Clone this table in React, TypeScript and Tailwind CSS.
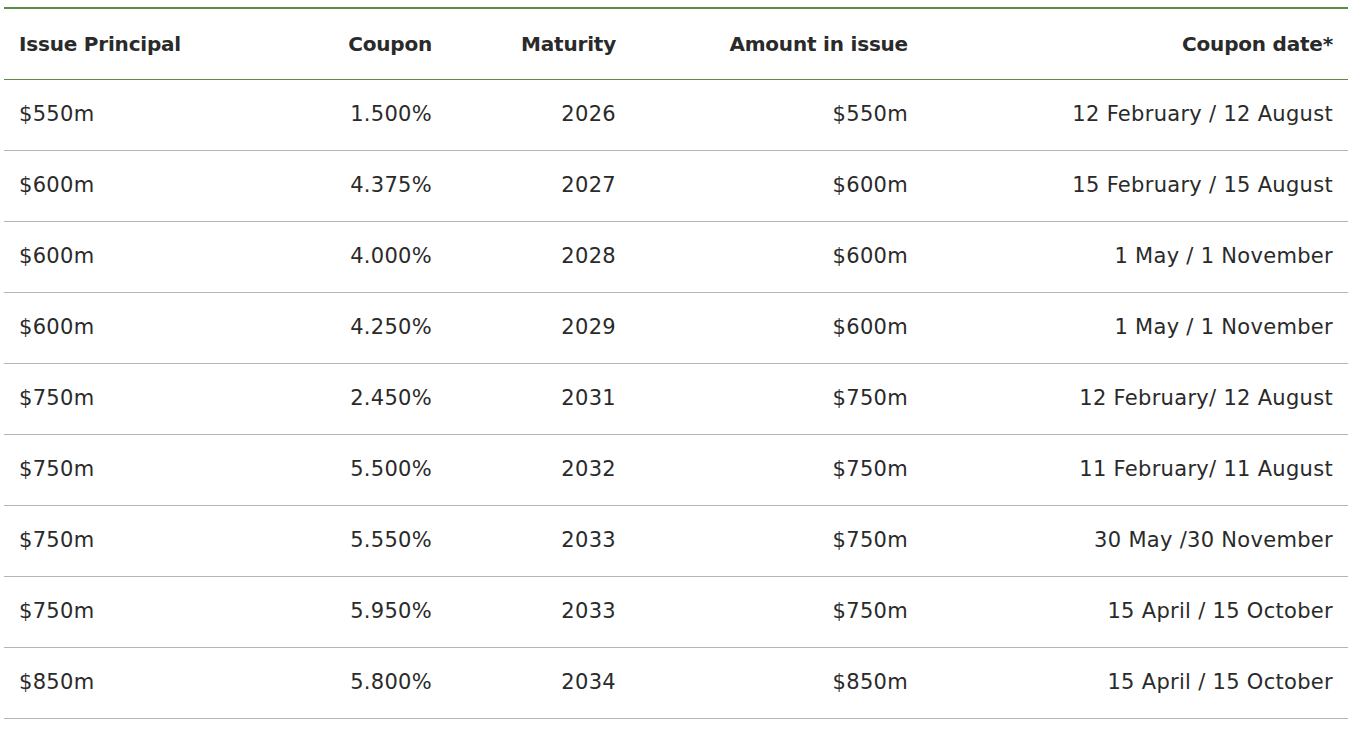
import React from 'react';

type Bond = {
  principal: string;
  coupon: string;
  maturity: string;
  amount: string;
  dates: string;
};

const bonds: Bond[] = [
  { principal: '$550m', coupon: '1.500%', maturity: '2026', amount: '$550m', dates: '12 February / 12 August' },
  { principal: '$600m', coupon: '4.375%', maturity: '2027', amount: '$600m', dates: '15 February / 15 August' },
  { principal: '$600m', coupon: '4.000%', maturity: '2028', amount: '$600m', dates: '1 May / 1 November' },
  { principal: '$600m', coupon: '4.250%', maturity: '2029', amount: '$600m', dates: '1 May / 1 November' },
  { principal: '$750m', coupon: '2.450%', maturity: '2031', amount: '$750m', dates: '12 February/ 12 August' },
  { principal: '$750m', coupon: '5.500%', maturity: '2032', amount: '$750m', dates: '11 February/ 11 August' },
  { principal: '$750m', coupon: '5.550%', maturity: '2033', amount: '$750m', dates: '30 May /30 November' },
  { principal: '$750m', coupon: '5.950%', maturity: '2033', amount: '$750m', dates: '15 April / 15 October' },
  { principal: '$850m', coupon: '5.800%', maturity: '2034', amount: '$850m', dates: '15 April / 15 October' },
];

const cols = 'grid grid-cols-[220px_223px_184px_292px_425px]';

const App = () => {
  return (
    <div className="min-h-screen bg-white pt-[7px] pl-[4px] font-['DejaVu_Sans',sans-serif] text-[#2a2a2a]">
      <div className="w-[1344px] border-t-2 border-[#5e8c45]">
        {/* header */}
        <div className={`${cols} h-[71px] items-center border-b border-[#5e8c45] text-[20px] font-bold tracking-[-0.2px]`}>
          <div className="pl-[15px]">Issue Principal</div>
          <div className="pr-[15px] text-right">Coupon</div>
          <div className="pr-[15px] text-right">Maturity</div>
          <div className="pr-[15px] text-right">Amount in issue</div>
          <div className="pr-[15px] text-right">Coupon date*</div>
        </div>

        {bonds.map((b, i) => (
          <div key={i} className={`${cols} h-[71px] items-center border-b border-[#b4b4bc] text-[21px] tracking-[0.3px]`}>
            <div className="pl-[15px]">{b.principal}</div>
            <div className="pr-[15px] text-right">{b.coupon}</div>
            <div className="pr-[15px] text-right">{b.maturity}</div>
            <div className="pr-[15px] text-right">{b.amount}</div>
            <div className="pr-[15px] text-right">{b.dates}</div>
          </div>
        ))}
      </div>
    </div>
  );
};

export default App;
